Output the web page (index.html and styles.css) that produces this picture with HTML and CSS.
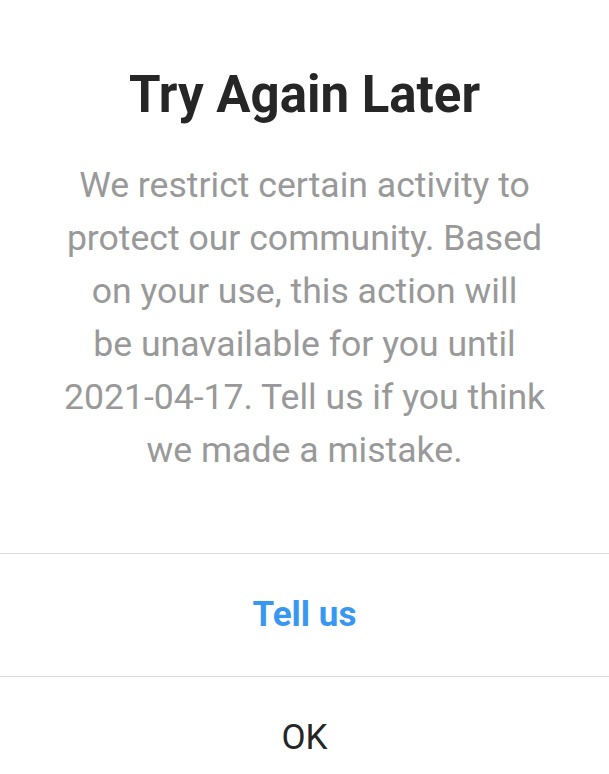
FILE: index.html
```
<!DOCTYPE html>
<html lang="en">
<head>
    <meta charset="UTF-8">
    <meta name="viewport" content="width=device-width, initial-scale=1.0">
    <title>Try Again Later</title>
    <link rel="stylesheet" href="styles.css">
</head>
<body>
    <div class="dialog">
        <div class="dialog-body">
            <h1 class="dialog-title">Try Again Later</h1>
            <p class="dialog-text">We restrict certain activity to<br>
                protect our community. Based<br>
                on your use, this action will<br>
                be unavailable for you until<br>
                2021-04-17. Tell us if you think<br>
                we made a mistake.</p>
        </div>
        <button class="dialog-btn primary">Tell us</button>
        <button class="dialog-btn">OK</button>
    </div>
</body>
</html>
```

FILE: styles.css
```
body {
    margin: 0;
    background: #fff;
    font-family: Roboto, 'Liberation Sans', sans-serif;
}
.dialog {
    display: flex;
    flex-direction: column;
}
.dialog-body {
    padding: 63px 30px 0;
    height: 553px;
    box-sizing: border-box;
    text-align: center;
}
.dialog-title {
    margin: 0 0 32px;
    font-size: 51px;
    font-weight: 700;
    line-height: 64px;
    color: #262626;
}
.dialog-text {
    margin: 0;
    font-size: 35.6px;
    line-height: 53px;
    color: #999;
}
.dialog-btn {
    height: 123px;
    padding-bottom: 3px;
    border: 0;
    border-top: 1px solid #dbdbdb;
    background: #fff;
    font-family: inherit;
    font-size: 35px;
    color: #262626;
}
.dialog-btn.primary {
    font-weight: 700;
    color: #3897f0;
}
```
